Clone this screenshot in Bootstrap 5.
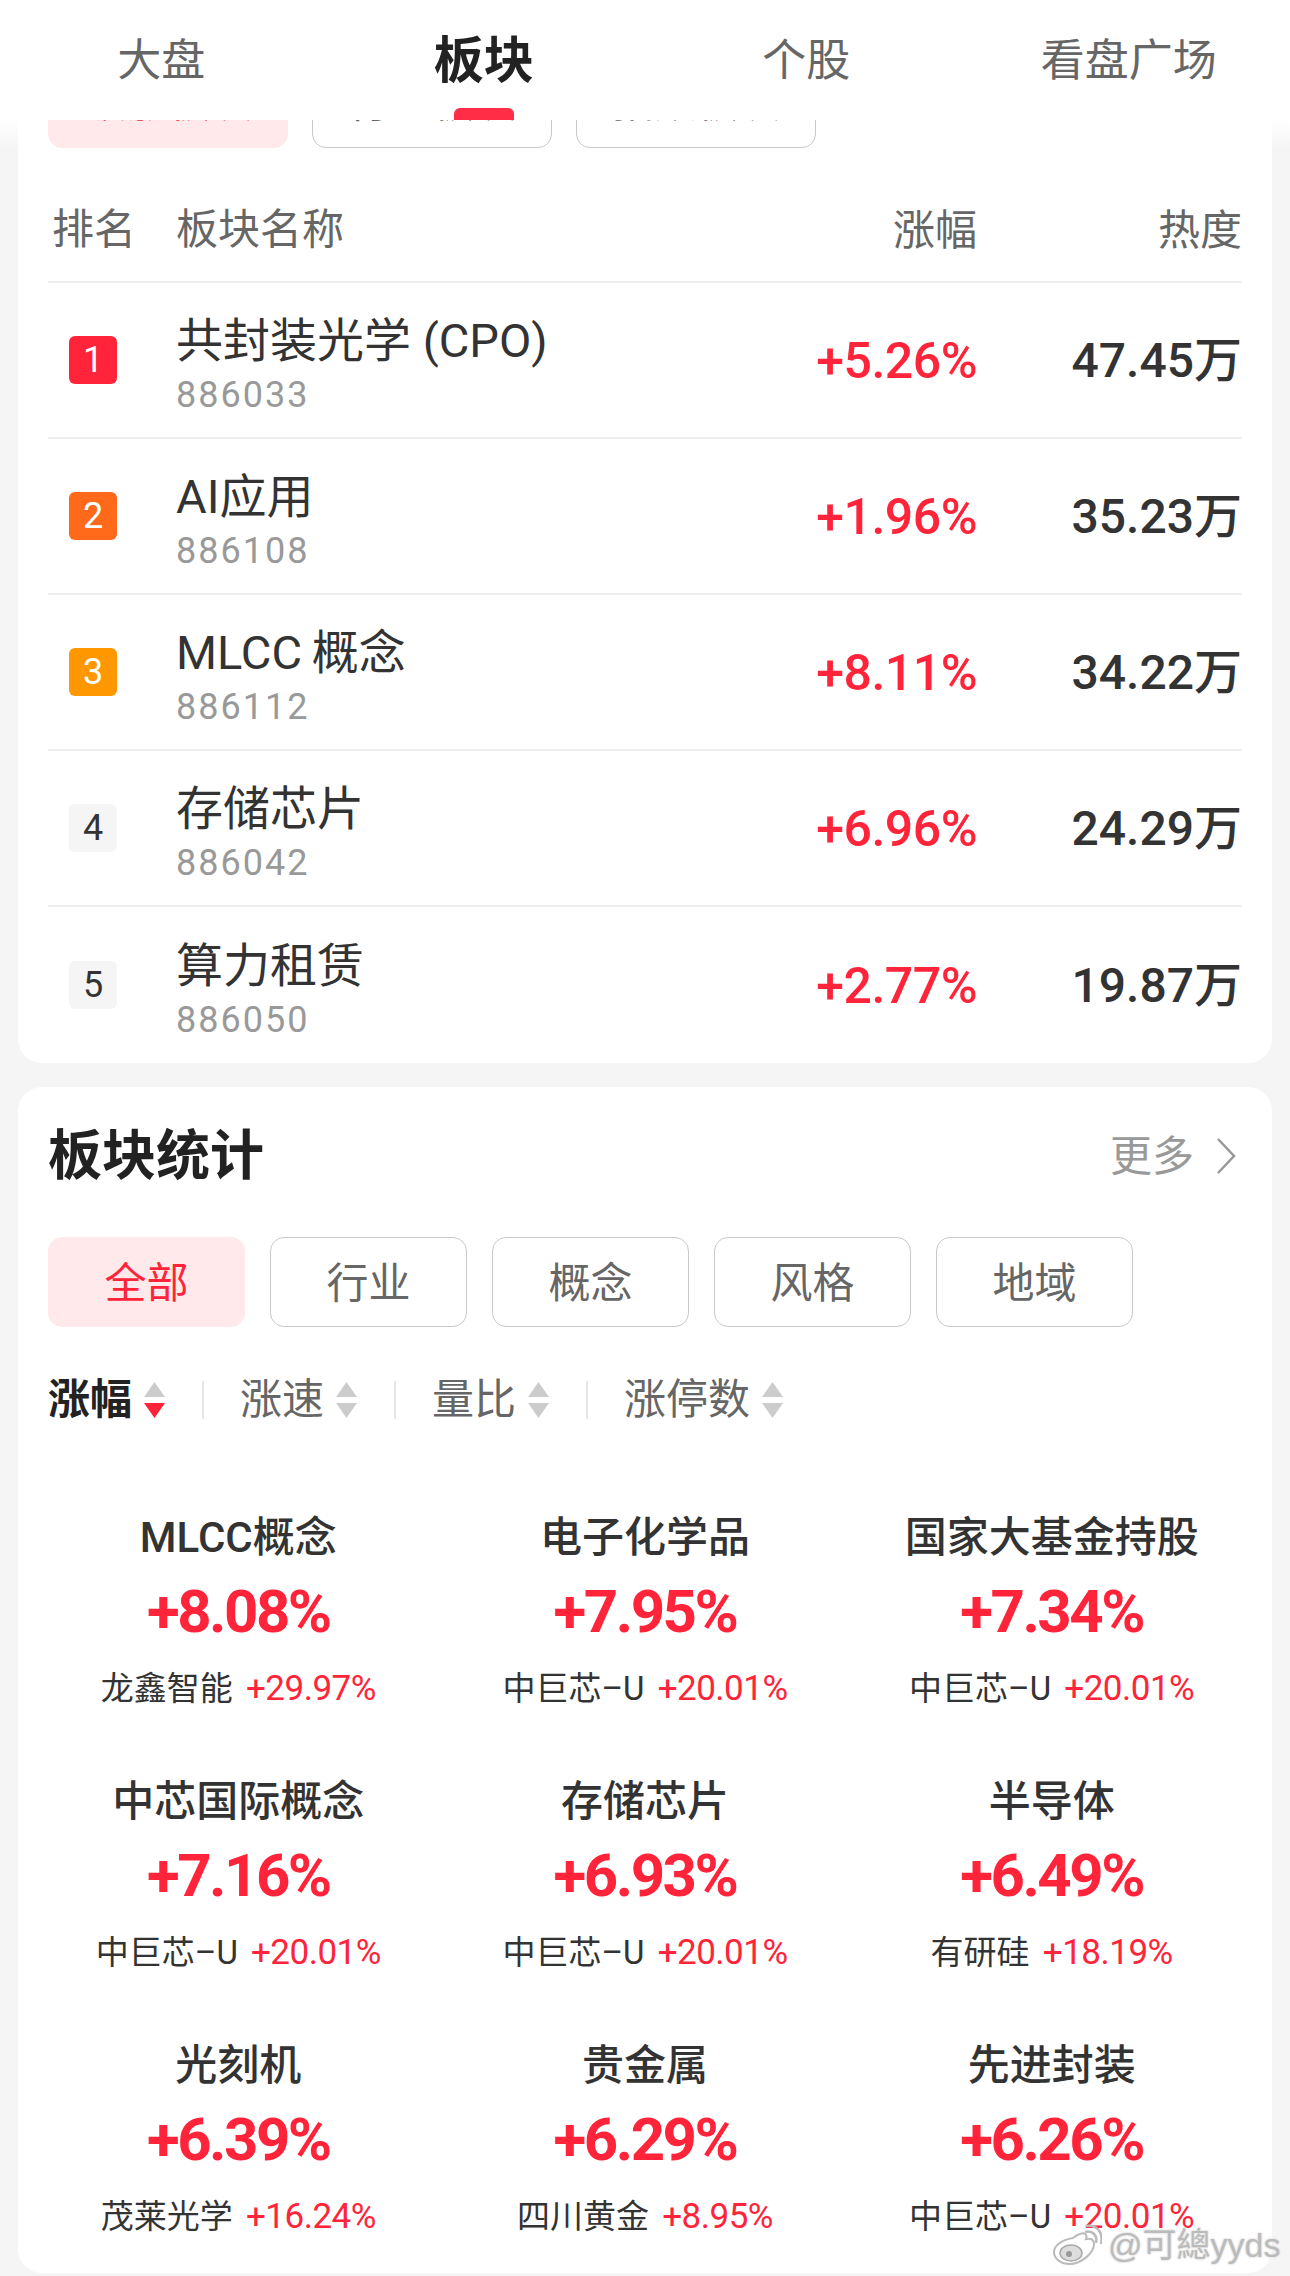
<!DOCTYPE html>
<html lang="zh">
<head>
    <meta charset="UTF-8">
    <meta name="viewport" content="width=device-width, initial-scale=1">
    <title>板块</title>
    <link href="https://cdn.jsdelivr.net/npm/bootstrap@5.3.3/dist/css/bootstrap.min.css" rel="stylesheet">
    <style>
        body { background: linear-gradient(#fff 120px, #f5f5f5 148px); color: #333; font-family: Roboto, "Noto Sans CJK SC", sans-serif; width: 1290px; height: 2276px; overflow: hidden; position: relative; }
        .top-tabs { height: 120px; background: #fff; position: relative; }
        .top-tab { height: 120px; line-height: 122px; font-size: 44px; color: #666; text-align: center; }
        .top-tab.on { font-size: 50px; font-weight: 700; color: #222; }
        .tab-bar { position: absolute; left: 454px; top: 108px; width: 60px; height: 12px; background: #ff2d46; border-radius: 6px 6px 0 0; }
        .sheet { background: #fff; margin: 0 18px; padding: 0 30px; }
        .sheet-a { border-radius: 0 0 24px 24px; height: 943px; }
        .sheet-b { border-radius: 24px; height: 1186px; margin-top: 24px; }
        .clip-row { height: 28px; overflow: hidden; align-items: flex-end; gap: 24px; }
        .chip { width: 240px; height: 90px; flex: none; font-size: 42px; line-height: 92px; text-align: center; border: 1px solid #c9c9c9; border-radius: 14px; color: #666; }
        .clip-row .chip { line-height: 87px; }
        .chip.on { background: #ffe9eb; border-color: #ffe9eb; color: #ff2439; }
        .chip-sm { width: 197px; }
        .chip-line { gap: 25px; }
        .head-row { height: 135px; border-bottom: 2px solid #eee; font-size: 42px; color: #666; padding-top: 30px; }
        .rank-row { height: 156px; border-bottom: 2px solid #eee; }
        .rank-row:last-child { border-bottom: 0; }
        .col-rank { width: 128px; flex: none; }
        .col-pct { width: 200px; flex: none; text-align: right; padding-top: 2px; }
        .col-heat { width: 265px; flex: none; text-align: right; padding-top: 2px; }
        .rank-no { width: 48px; height: 48px; margin-left: 21px; border-radius: 6px; font-size: 36px; line-height: 48px; text-align: center; background: #f5f5f5; color: #333; }
        .no1 { background: #ff2439; color: #fff; }
        .no2 { background: #ff6a1a; color: #fff; }
        .no3 { background: #ff9800; color: #fff; }
        .sec-box { padding-top: 8px; }
        .sec-name { font-size: 47px; line-height: 56px; }
        .sec-code { font-size: 36px; line-height: 40px; color: #999; letter-spacing: 2px; margin-top: 6px; }
        .up-pct { color: #ff2439; font-size: 50px; font-weight: 500; letter-spacing: -.5px; }
        .heat-val { font-size: 48px; font-weight: 500; color: #333; }
        .stat-head { height: 150px; padding-bottom: 12px; }
        .stat-title { font-size: 54px; font-weight: 700; color: #222; }
        .stat-more { font-size: 42px; color: #999; gap: 22px; margin-right: 6px; }
        .sort-row { margin-top: 53px; height: 40px; font-size: 42px; line-height: 40px; color: #666; }
        .sort-item { gap: 12px; }
        .sort-item.on { font-weight: 700; color: #222; }
        .sort-gap { width: 2px; height: 38px; background: #e5e5e5; margin: 0 36px 0 37px; }
        .updown { width: 21px; height: 36px; }
        .stat-grid { margin: 93px -13px 0; }
        .stat-cell { height: 264px; text-align: center; }
        .cell-name { font-size: 42px; line-height: 50px; font-weight: 500; color: #333; }
        .cell-pct { font-size: 60px; line-height: 64px; font-weight: 700; letter-spacing: -2.5px; color: #ff2439; margin-top: 17px; }
        .cell-sub { font-size: 33px; line-height: 40px; margin-top: 25px; color: #333; }
        .cell-sub b { font-size: 35px; font-weight: 400; letter-spacing: -.5px; color: #ff2439; margin-left: 5px; }
        .wm { position: absolute; left: 1052px; top: 2220px; gap: 6px; white-space: nowrap; font-family: "Liberation Sans", "Noto Sans CJK TC", sans-serif; font-size: 34px; color: #bbb; text-shadow: 0 0 3px #fff, 0 0 2px #999; }
    </style>
</head>
<body>
    <!-- 顶部导航 -->
    <div class="top-tabs row g-0">
        <div class="col-3 top-tab">大盘</div>
        <div class="col-3 top-tab on">板块</div>
        <div class="col-3 top-tab">个股</div>
        <div class="col-3 top-tab">看盘广场</div>
        <div class="tab-bar"></div>
    </div>

    <!-- 热度排行 -->
    <div class="sheet sheet-a">
        <div class="clip-row d-flex">
            <div class="chip on">领涨板块</div>
            <div class="chip">行业板块</div>
            <div class="chip">指数板块</div>
        </div>
        <div class="head-row d-flex align-items-center">
            <div class="col-rank ps-1">排名</div>
            <div class="flex-grow-1">板块名称</div>
            <div class="col-pct">涨幅</div>
            <div class="col-heat">热度</div>
        </div>
        <div class="rank-row d-flex align-items-center">
            <div class="col-rank"><div class="rank-no no1">1</div></div>
            <div class="flex-grow-1 sec-box"><div class="sec-name">共封装光学 (CPO)</div><div class="sec-code">886033</div></div>
            <div class="col-pct up-pct">+5.26%</div>
            <div class="col-heat heat-val">47.45万</div>
        </div>
        <div class="rank-row d-flex align-items-center">
            <div class="col-rank"><div class="rank-no no2">2</div></div>
            <div class="flex-grow-1 sec-box"><div class="sec-name">AI应用</div><div class="sec-code">886108</div></div>
            <div class="col-pct up-pct">+1.96%</div>
            <div class="col-heat heat-val">35.23万</div>
        </div>
        <div class="rank-row d-flex align-items-center">
            <div class="col-rank"><div class="rank-no no3">3</div></div>
            <div class="flex-grow-1 sec-box"><div class="sec-name">MLCC&#8201;概念</div><div class="sec-code">886112</div></div>
            <div class="col-pct up-pct">+8.11%</div>
            <div class="col-heat heat-val">34.22万</div>
        </div>
        <div class="rank-row d-flex align-items-center">
            <div class="col-rank"><div class="rank-no">4</div></div>
            <div class="flex-grow-1 sec-box"><div class="sec-name">存储芯片</div><div class="sec-code">886042</div></div>
            <div class="col-pct up-pct">+6.96%</div>
            <div class="col-heat heat-val">24.29万</div>
        </div>
        <div class="rank-row d-flex align-items-center">
            <div class="col-rank"><div class="rank-no">5</div></div>
            <div class="flex-grow-1 sec-box"><div class="sec-name">算力租赁</div><div class="sec-code">886050</div></div>
            <div class="col-pct up-pct">+2.77%</div>
            <div class="col-heat heat-val">19.87万</div>
        </div>
    </div>

    <!-- 板块统计 -->
    <div class="sheet sheet-b">
        <div class="stat-head d-flex justify-content-between align-items-center">
            <div class="stat-title">板块统计</div>
            <div class="stat-more d-flex align-items-center">更多
                <svg width="20" height="36" viewBox="0 0 20 36"><polyline points="2,1 18,18 2,35" fill="none" stroke="#999" stroke-width="2.5"/></svg>
            </div>
        </div>
        <div class="chip-line d-flex">
            <div class="chip chip-sm on">全部</div>
            <div class="chip chip-sm">行业</div>
            <div class="chip chip-sm">概念</div>
            <div class="chip chip-sm">风格</div>
            <div class="chip chip-sm">地域</div>
        </div>
        <div class="sort-row d-flex align-items-center">
            <div class="sort-item on d-flex align-items-center">涨幅
                <svg class="updown" viewBox="0 0 21 36"><polygon points="10.5,0 21,15 0,15" fill="#ccc"/><polygon points="0,21 21,21 10.5,36" fill="#ff2439"/></svg>
            </div>
            <div class="sort-gap"></div>
            <div class="sort-item d-flex align-items-center">涨速
                <svg class="updown" viewBox="0 0 21 36"><polygon points="10.5,0 21,15 0,15" fill="#ccc"/><polygon points="0,21 21,21 10.5,36" fill="#ccc"/></svg>
            </div>
            <div class="sort-gap"></div>
            <div class="sort-item d-flex align-items-center">量比
                <svg class="updown" viewBox="0 0 21 36"><polygon points="10.5,0 21,15 0,15" fill="#ccc"/><polygon points="0,21 21,21 10.5,36" fill="#ccc"/></svg>
            </div>
            <div class="sort-gap"></div>
            <div class="sort-item d-flex align-items-center">涨停数
                <svg class="updown" viewBox="0 0 21 36"><polygon points="10.5,0 21,15 0,15" fill="#ccc"/><polygon points="0,21 21,21 10.5,36" fill="#ccc"/></svg>
            </div>
        </div>
        <div class="stat-grid row g-0">
            <div class="col-4 stat-cell"><div class="cell-name">MLCC概念</div><div class="cell-pct">+8.08%</div><div class="cell-sub">龙鑫智能 <b>+29.97%</b></div></div>
            <div class="col-4 stat-cell"><div class="cell-name">电子化学品</div><div class="cell-pct">+7.95%</div><div class="cell-sub">中巨芯–U <b>+20.01%</b></div></div>
            <div class="col-4 stat-cell"><div class="cell-name">国家大基金持股</div><div class="cell-pct">+7.34%</div><div class="cell-sub">中巨芯–U <b>+20.01%</b></div></div>
            <div class="col-4 stat-cell"><div class="cell-name">中芯国际概念</div><div class="cell-pct">+7.16%</div><div class="cell-sub">中巨芯–U <b>+20.01%</b></div></div>
            <div class="col-4 stat-cell"><div class="cell-name">存储芯片</div><div class="cell-pct">+6.93%</div><div class="cell-sub">中巨芯–U <b>+20.01%</b></div></div>
            <div class="col-4 stat-cell"><div class="cell-name">半导体</div><div class="cell-pct">+6.49%</div><div class="cell-sub">有研硅 <b>+18.19%</b></div></div>
            <div class="col-4 stat-cell"><div class="cell-name">光刻机</div><div class="cell-pct">+6.39%</div><div class="cell-sub">茂莱光学 <b>+16.24%</b></div></div>
            <div class="col-4 stat-cell"><div class="cell-name">贵金属</div><div class="cell-pct">+6.29%</div><div class="cell-sub">四川黄金 <b>+8.95%</b></div></div>
            <div class="col-4 stat-cell"><div class="cell-name">先进封装</div><div class="cell-pct">+6.26%</div><div class="cell-sub">中巨芯–U <b>+20.01%</b></div></div>
        </div>
    </div>

    <!-- 水印 -->
    <div class="wm d-flex align-items-center">
        <svg width="50" height="44" viewBox="0 0 50 44">
            <path d="M21 14c6-5 12-6 13-3 1 2 0 4 0 4 4-1 8 0 8 5 0 9-13 20-24 20C9 40 2 35 2 28c0-6 7-12 19-14z" fill="#fff" stroke="#bbb" stroke-width="2"/>
            <ellipse cx="19" cy="29" rx="11" ry="8" fill="#ddd" stroke="#aaa" stroke-width="1.5"/>
            <circle cx="17" cy="30" r="3" fill="#999"/>
            <path d="M33 8c7-2 13 3 11 11M34 2c10-2 18 6 15 18" fill="none" stroke="#bbb" stroke-width="2.5"/>
        </svg>
        <span>@可總yyds</span>
    </div>

    <script src="https://cdn.jsdelivr.net/npm/bootstrap@5.3.3/dist/js/bootstrap.bundle.min.js"></script>
</body>
</html>
